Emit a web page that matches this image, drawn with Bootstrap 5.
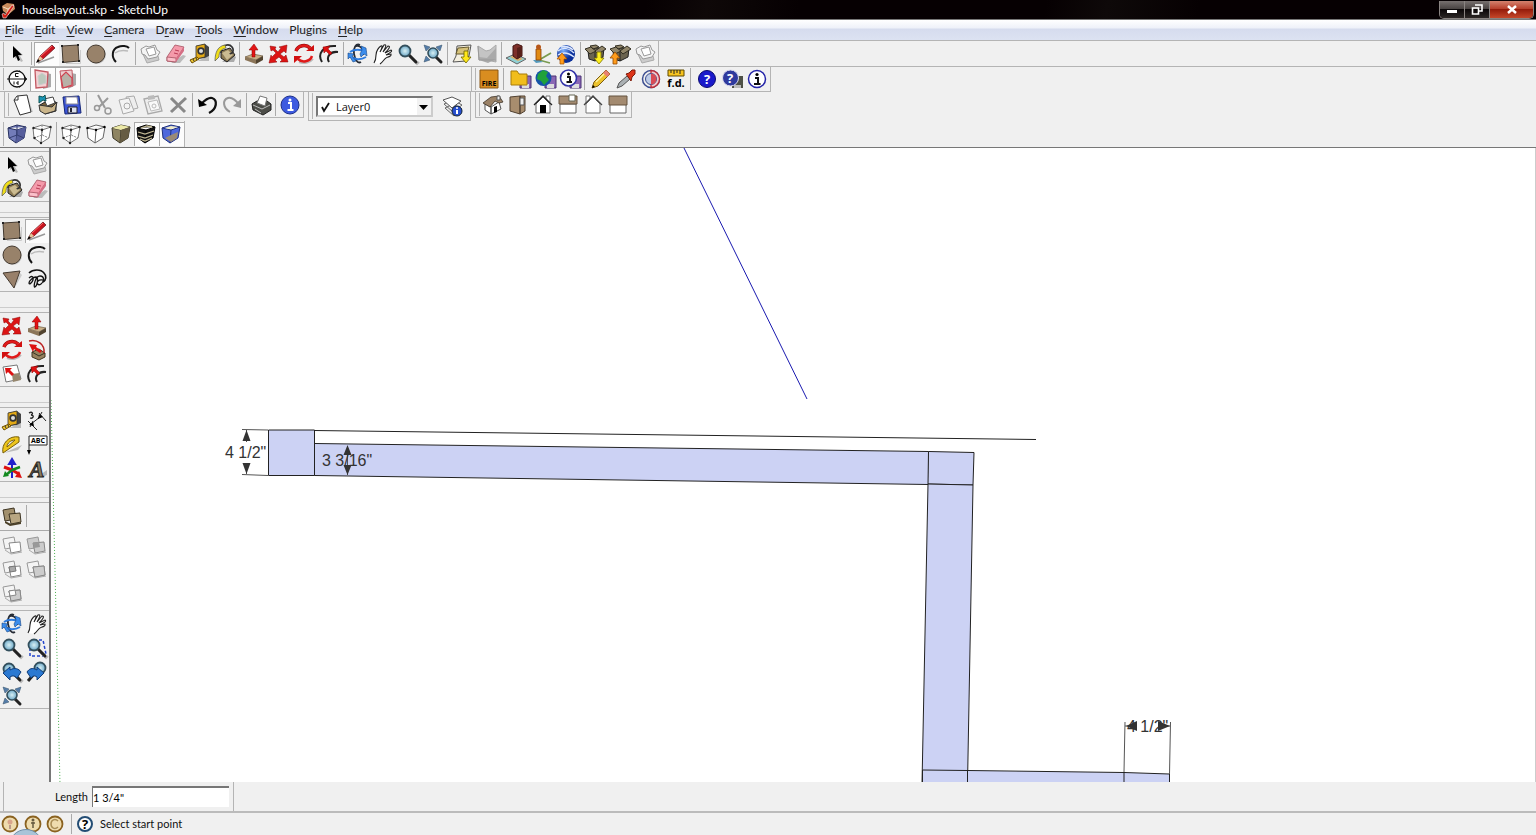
<!DOCTYPE html>
<html lang="en">
<head>
<meta charset="utf-8">
<meta name="viewport" content="width=device-width, initial-scale=1">
<title>houselayout.skp - SketchUp</title>
<link href="https://cdn.jsdelivr.net/npm/bootstrap@5.3.0/dist/css/bootstrap.min.css" rel="stylesheet">
<script src="https://cdn.jsdelivr.net/npm/bootstrap@5.3.0/dist/js/bootstrap.bundle.min.js"></script>
<style>
:root{--face:#f0f0f0;--line:#b4b4b4}
body{font-family:Lato,"Open Sans",sans-serif;font-size:12px;line-height:16px;color:#111;background:var(--face)}
button{padding:0;border:0;background:none;color:inherit}
.titlebar{height:20px;background:linear-gradient(100deg,#060002 0 42%,#0e0808 46%,#060002 52% 68%,#0e0909 72%,#060002 78%);border-bottom:1px solid #777;color:#fff}
.titlebar h1{font-size:12px;line-height:18px;font-weight:400;margin:0}
.caption-btns{height:18px;border:1px solid #8a8482;border-top:0;border-radius:0 0 5px 5px;overflow:hidden;margin-right:2px}
.caption-btns button{width:25px;height:17px;background:linear-gradient(#77706f,#4a4443 45%,#0b0708 50%,#2b2625);border-right:1px solid #8a8482}
.caption-btns button:last-child{width:43px;border:0;background:linear-gradient(#d4826e,#b8402c 45%,#951c0b 50%,#c5472a)}
.caption-btns svg{width:14px;height:14px}
.menubar{height:21px;gap:11px;padding-left:5px;background:linear-gradient(#fff,#eef1f9 40%,#d6dcee 45%,#dce2f2);border-bottom:1px solid var(--line)}
.menubar a{color:#222;text-decoration:none}
.menubar a u{text-underline-offset:2px}
.dock{border-bottom:1px solid var(--line)}
.dock-short{max-width:771px}
.h-std{height:26px}.h-sec{height:25px}.h-file{height:29px}
.band{padding-left:5px}
.band::before{content:"";align-self:stretch;width:1px;margin:1px 0 1px -2px;background:var(--line);margin-right:1px}
.band-end{border-right:1px solid var(--line)}
.w-section{flex:0 0 81px;border-right:1px solid var(--line)}
.w-spare{flex:0 0 391px;border-right:1px solid var(--line)}
.boxed{border:1px solid var(--line);border-top:0;height:26px}
.boxed.tall{height:29px}
.tb{width:25px;height:24px;flex:none;display:block}
.tb svg,.st svg{display:block;width:24px;height:24px}
.tb.active{background:#fcfcfc;box-shadow:inset 1px 1px #aaa}
.tb text,.st text{font-family:"Open Sans",sans-serif;font-weight:700;text-anchor:middle}
.tb .serif-a{font:italic 700 23px "Liberation Serif",serif}
.tb .tiny{font-size:7px}.tb .mid{font-size:11px}.tb .big,.st .big{font-size:13px}
.rule{flex:none;width:4px;align-self:stretch;margin:1px 0;background:linear-gradient(90deg,transparent 1px,#aaa 1px 2px,transparent 2px)}
.rule.wide{width:6px}
.layer{position:relative;width:117px;height:21px;margin-left:2px}
.layer select{appearance:none;width:100%;height:100%;border:2px solid #777;border-right-color:#ccc;border-bottom-color:#ccc;background:#fff;padding:0 0 0 18px;font:11px/15px "Open Sans",sans-serif;border-radius:0;color:#111}
.layer svg{position:absolute;inset:0;pointer-events:none;width:117px;height:21px}
.palettes{width:51px;flex:none;border-right:2px solid #777;padding-top:3px}
.palette{position:relative;border:solid var(--line);border-width:1px 0;padding-top:1px;display:flex;flex-wrap:wrap;margin-bottom:20px}
.palette .tb{width:24px;margin-right:0}
.palette .tb:nth-of-type(odd){margin-right:1px}
.palette + .palette::before{content:"";position:absolute;left:0;right:0;top:-6px;height:1px;background:#ccc}
.palette hr{width:100%;height:1px;margin:2px 0;border:0;background:#aaa;opacity:1}
.gap-s{margin-bottom:15px}.gap-xs{margin-bottom:4px}
.stage{border-top:1px solid #777}
.stage .view{background:#fff;min-width:0;overflow:hidden;border-right:1px solid #ccc}
.stage .view svg{display:block;width:100%;height:100%}
.dimtext{font:16px "Liberation Sans",Arial,sans-serif;fill:#333}
.vcb{height:31px;border-bottom:2px solid #bbb;font-size:11px}
.vcb .cell{width:231px;border:solid var(--line);border-width:0 1px;margin-left:3px;padding-right:4px}
.vcb input{width:137px;height:21px;border:solid #777;border-width:2px 0 0 1px;background:#fff;padding:0;font-size:11px;border-radius:0}
.statusbar{position:relative;height:22px;font-size:11px;overflow:hidden}
.statusbar .st{width:22px;height:22px;flex:none}
.statusbar .st svg{width:22px;height:22px}
.orb{position:absolute;left:9px;top:16px;width:34px;height:34px;border-radius:50%;background:#a9c4d8;border:1px solid #7290a8}
</style>
</head>
<body class="vh-100 d-flex flex-column overflow-hidden">
<svg width="0" height="0" class="position-absolute" aria-hidden="true">
<defs>
<radialGradient id="lens"><stop stop-color="#d8f0f4"/><stop offset="1" stop-color="#6aa6c6"/></radialGradient>
<radialGradient id="globe" cx=".35" cy=".3"><stop stop-color="#7fb2ff"/><stop offset="1" stop-color="#0a2f9a"/></radialGradient>
</defs>
<symbol id="select" viewBox="0 0 24 24"><path d="M10 6v11l3-2 3 5 2-1-3-5 3-1z" fill="#bbb"/><path d="M8 4v12l3-2 2 5 2-1-2-5h4z"/></symbol>
<symbol id="pencil" viewBox="0 0 24 24"><path d="M4 21l16-6" stroke="#999" stroke-width="1.5"/><path d="M3 20l3-6 12-11 3 3L9 17z" fill="#c91520" stroke="#601015" stroke-width=".7"/><path d="M7 14L18 4" stroke="#f66" stroke-width="1"/><path d="M3 20l3-6 3 3z" fill="#e4c79a"/><path d="M2 21l2-4 2 2z"/></symbol>
<symbol id="rect" viewBox="0 0 24 24"><path d="M7 21.500h14.500V8" fill="none" stroke="#ccc"/><path d="M3 4l16-1 1 16-16 1.500z" fill="#98826a" stroke="#443a30"/><path d="M2 3h2v2H2zM18 2h2v2h-2zM19 18h2v2h-2zM3 19h2v2H3z" fill="#222"/></symbol>
<symbol id="circle" viewBox="0 0 24 24"><circle cx="13" cy="13" r="9" fill="#ccc"/><circle cx="12" cy="12" r="9" fill="#98826a" stroke="#443a30"/></symbol>
<symbol id="arc" viewBox="0 0 24 24"><path d="M6 11c4-3 8-3 13-2" fill="none" stroke="#bbb" stroke-width="1.500"/><path d="M7 20C2 15 3 7 9 5c4-2 9-1 11 1" fill="none" stroke="#151515" stroke-width="2"/></symbol>
<symbol id="tri" viewBox="0 0 24 24"><path d="M20 6l2 2-8 14z" fill="#ccc"/><path d="M3 6l17-2-6 17z" fill="#98806a" stroke="#443a30"/></symbol>
<symbol id="free" viewBox="0 0 24 24"><path d="M4 6c4-4 12-4 15 0 3 3 2 7-1 9" fill="none" stroke="#111" stroke-width="1.700"/><path d="M4 11c3-3 5-1 4 2s-4 5-4 3 4-6 7-6 1 9-1 10 0-11 5-11 4 6 1 8-5-1-3-3 6-1 7 0" fill="none" stroke="#111" stroke-width="1.300"/></symbol>
<symbol id="comp" viewBox="0 0 24 24"><path d="M4 10l5 11 12-3-1-4" fill="#ccc" stroke="#aaa"/><path d="M3 7l5-3 3 1 6-2 2 5 3 2-3 5-9 2-3-4-3-1z" fill="#f4f4f4" stroke="#999"/><path d="M8 7l8-2 2 7-7 2z" fill="#fff" stroke="#999"/></symbol>
<symbol id="eraser" viewBox="0 0 24 24"><path d="M8 21h9l6-7-3-1z" fill="#bbb"/><path d="M4 15L12 3l9 2-8 13-1 2-8-1z" fill="#f49aaa" stroke="#a55060" stroke-width=".8"/><path d="M4 15l9 1v4l-9-1z" fill="#fbc0ca" stroke="#a55060" stroke-width=".8"/><path d="M21 5v4l-8 11v-4z" fill="#d56f85"/><path d="M12 8l4 1M11 11l4 1" stroke="#b93b55"/></symbol>
<symbol id="tape" viewBox="0 0 24 24"><path d="M9 19h12v-5z" fill="#bbb"/><path d="M8 4l9-2 4 3v9l-4 2-9 1z" fill="#444"/><path d="M8 4l9-2v13l-9 2z" fill="#e3a915" stroke="#333" stroke-width=".8"/><circle cx="13" cy="9" r="3.700" fill="#333"/><circle cx="13" cy="9" r="2" fill="#ddd"/><path d="M11 17l-7 4-2-3 7-3z" fill="#edc635" stroke="#705000"/><path d="M5 17l1 2M8 16l1 2" stroke="#333"/></symbol>
<symbol id="paint" viewBox="0 0 24 24"><path d="M9 20h12l2-5-4-3z" fill="#aaa"/><path d="M8 9l9-3 5 7-8 7-6-4z" fill="#8c7a54" stroke="#222"/><path d="M9 11l5 7 6-5-5-5z" fill="#cbbb91"/><path d="M8 11C7 3 16 1 19 5s-1 8-2 6" fill="none" stroke="#333" stroke-width="1.700"/><path d="M12 3C5 4 2 10 2 19l4-4c0-5 2-8 7-9z" fill="#f0de18" stroke="#555" stroke-width=".7"/></symbol>
<symbol id="push" viewBox="0 0 24 24"><path d="M3 15l8-3 10 2-7 4z" fill="#c8ae86" stroke="#57462e" stroke-width=".6"/><path d="M3 15l11 3v4L3 18z" fill="#8b7558"/><path d="M14 18l7-4v4l-7 4z" fill="#51432f"/><path d="M10 15V8H7l5-6 4 6h-3v7z" fill="#e31515" stroke="#800" stroke-width=".5"/></symbol>
<symbol id="move" viewBox="0 0 24 24"><path d="M3 4l6 1-1 2 3 3 3-4-2-1 8-2-1 8-2-2-4 3 4 3 2-2 2 7-8 0 2-2-3-3-4 3 2 2-8 1 2-8 1 2 4-4-3-3-2 1z" fill="#dc1515" stroke="#8d0505" stroke-width=".5"/></symbol>
<symbol id="rotate" viewBox="0 0 24 24"><path d="M7 20c5 2 11 1 14-3" fill="none" stroke="#bbb" stroke-width="2"/><path d="M4 9c2-6 10-7 14-3" fill="none" stroke="#8a0000" stroke-width="3.500"/><path d="M4 9c2-6 10-7 14-3M20 14c-2 6-10 7-14 3" fill="none" stroke="#e01a1a" stroke-width="2.500"/><path d="M14 9h8V3zM10 14H2v7z" fill="#d11010"/></symbol>
<symbol id="offset" viewBox="0 0 24 24"><path d="M5 20C0 12 6 3 19 4M12 20c-3-5 1-11 9-10" fill="none" stroke="#222" stroke-width="2"/><path d="M6 5l7-1-2 3 4 4-2 2-4-4-2 2z" fill="#d11" stroke="#800" stroke-width=".5"/></symbol>
<symbol id="follow" viewBox="0 0 24 24"><path d="M7 14l7-3 6 4v4l-6 3-7-3z" fill="#96805e" stroke="#433722"/><path d="M7 14l7 4 6-3" fill="none" stroke="#332"/><path d="M4 3c8-2 16 3 15 12" fill="none" stroke="#b22" stroke-width="1.500"/><path d="M15 15l-6-4-1 3-4-8 8 1-1 2 6 4z" fill="#d11"/></symbol>
<symbol id="scale" viewBox="0 0 24 24"><path d="M3 5l14-2 4 14-15 3z" fill="#fff" stroke="#777"/><path d="M12 12l7-1 2 7-8 2z" fill="#96876e"/><path d="M5 6l7 0-2 2 4 4-2 2-4-4-2 2z" fill="#d11"/></symbol>
<symbol id="orbit" viewBox="0 0 24 24"><path d="M14 3c-4-2-7 3-6 9s4 10 7 8M10 4c5-1 8 4 7 9" fill="none" stroke="#252b35" stroke-width="1.800"/><path d="M4 10c4-3 11-3 16 0M4 14c4 4 11 4 16 1" fill="none" stroke="#2e7ce0" stroke-width="2"/><path d="M15 4l5 2 1 8-3-2-3 3-1-3 2-4zM2 11l6 1-2 2 4 5-3 1-3-5-2 2z" fill="#3b8cec" stroke="#174785" stroke-width=".6"/></symbol>
<symbol id="hand" viewBox="0 0 24 24"><path d="M3 21c2-3 2-5 2-8 0-4 3-8 5-9 2-1 1 2-1 6l4-7c3-1 2 2-1 7l5-6c3 0 1 3-3 7l6-3c2 1-1 3-5 5l5-1c1 2-3 3-5 4-2 1-3 4-6 6" fill="#fff" stroke="#222" stroke-width="1.100"/></symbol>
<symbol id="zoom" viewBox="0 0 24 24"><path d="M14 15l7 7 2-2" stroke="#bbb" stroke-width="2" fill="none"/><path d="M13 13l7 7" stroke="#222" stroke-width="3" stroke-linecap="round"/><circle cx="9" cy="9" r="5.500" fill="url(#lens)" stroke="#334f5c" stroke-width="1.800"/></symbol>
<symbol id="zoomwin" viewBox="0 0 24 24"><path d="M5 7v13h15M9 4h9l3 14" fill="none" stroke="#24c" stroke-width="1.500" stroke-dasharray="3 2"/><use href="#zoom"/></symbol>
<symbol id="extents" viewBox="0 0 24 24"><path d="M3 3l6 2-4 4zM21 3l-6 2 4 4zM3 20l6-2-4-4z" fill="#557da8" stroke="#34506b" stroke-width=".5"/><path d="M15 15l5 5" stroke="#222" stroke-width="3" stroke-linecap="round"/><circle cx="12" cy="11" r="5" fill="url(#lens)" stroke="#334f5c" stroke-width="1.600"/></symbol>
<symbol id="prev" viewBox="0 0 24 24"><use href="#zoom"/><path d="M3 13l7-6v3c5-3 9-1 11 2l-4 6c-2-2-4-3-7-1v3z" fill="#2b79d2" stroke="#103c78"/></symbol>
<symbol id="next" viewBox="0 0 24 24"><path d="M9 14l-6 7" stroke="#222" stroke-width="3"/><circle cx="15" cy="8" r="5.500" fill="url(#lens)" stroke="#334f5c" stroke-width="1.800"/><path d="M19 13l-7-6v3c-5-3-8-1-10 2l4 6c2-2 3-3 6-1v3z" fill="#2b79d2" stroke="#103c78"/></symbol>
<symbol id="map" viewBox="0 0 24 24"><path d="M7 4l14-1-2 11-3 5-13 1 3-6z" fill="#f4efdf" stroke="#555"/><path d="M8 6l11-1-2 7H6z" fill="#d6c27a" stroke="#665a30"/><path d="M14 9h4v6h3l-5 6-5-6h3z" fill="#ffe818" stroke="#6b6200" stroke-width=".8"/></symbol>
<symbol id="terrain" viewBox="0 0 24 24"><path d="M3 4l8 5 4-1 6-5v17l-14-3-3 1z" fill="#c4c4c4" stroke="#aaa"/><path d="M4 15l8 1 9-10v11l-8 4-9-3z" fill="#aaa"/><path d="M3 4l1 14h17" fill="none" stroke="#999"/></symbol>
<symbol id="model" viewBox="0 0 24 24"><path d="M2 16l9-4 11 5-9 5z" fill="#8fd0d4" stroke="#666"/><path d="M6 15l5-2 8 4-5 2z" fill="#d9ae69"/><path d="M9 4l4-2 5 2v10l-5 3-4-3z" fill="#7d3029" stroke="#431511"/><path d="M13 6l5-2v10l-5 3z" fill="#572019"/></symbol>
<symbol id="person" viewBox="0 0 24 24"><path d="M10 18l12-7M10 18l11 3" stroke="#7a9b50" stroke-width="1.800" fill="none"/><path d="M4 18h6l4 2-7 1z" fill="#59b"/><path d="M7 7h5v11H7z" fill="#e08a12" stroke="#8a3d05" stroke-width=".8"/><circle cx="9.500" cy="5" r="2.500" fill="#b75719"/></symbol>
<symbol id="gearth" viewBox="0 0 24 24"><circle cx="12" cy="12" r="9" fill="url(#globe)"/><path d="M4 9c5-4 11-3 16 2M4 13c6-4 11-2 16 2M7 5c5-1 9 0 12 3" fill="none" stroke="#dce8ff" stroke-width="1.500"/><path d="M6 22v-5H3l5-6 5 6h-3v5z" fill="#ff9c1b" stroke="#a55200" stroke-width=".7"/></symbol>
<symbol id="box" viewBox="0 0 24 24"><path d="M5 9l5-3h11l-1 9-8 4-6-2z" fill="#6b6450" stroke="#222"/><path d="M12 10v9" stroke="#222"/><path d="M2 7l6-2 5 4-6 3zM12 9l7-5 4 3-8 5zM7 4l6-1 3 2-6 2z" fill="#91866a" stroke="#332f22"/></symbol>
<symbol id="getmod" viewBox="0 0 24 24"><use href="#box"/><path d="M14 10h4v6h3l-5 6-5-6h3z" fill="#fff01e" stroke="#7b7200" stroke-width=".8"/></symbol>
<symbol id="sharemod" viewBox="0 0 24 24"><use href="#box"/><path d="M5 22v-6H2l5-6 5 6H9v6z" fill="#ff9c1b" stroke="#954900" stroke-width=".8"/></symbol>
<symbol id="section" viewBox="0 0 24 24"><path d="M14 3l8 9-8 9z" fill="#000"/><circle cx="12" cy="12" r="8" fill="#fff" stroke="#111" stroke-width="1.300"/><path d="M2 12h20M9 14.500v3M14 15h-2v2h2M13.500 6.500h-3v3h3" fill="none" stroke="#111"/></symbol>
<symbol id="secplane" viewBox="0 0 24 24"><path d="M12 5l9 2v13l-8 2z" fill="#aaa"/><path d="M5 3l13 2-1 15-11 1z" fill="#f4d1d3" stroke="#c25862" stroke-width="1.300"/><path d="M8 9l4-3 4 3v7l-7 2z" fill="#bcc9bd" stroke="#ccc"/></symbol>
<symbol id="seccut" viewBox="0 0 24 24"><path d="M12 5l9 2v11l-8 4z" fill="#aaa"/><path d="M5 4l12-1 1 16-11 2z" fill="#eccfd1" stroke="#c25862"/><path d="M6 10l5-5 6 6v7l-9 3z" fill="#b8b1a7" stroke="#d04250" stroke-width="1.200"/></symbol>
<symbol id="new" viewBox="0 0 24 24"><path d="M7 6l11-2 5 15-14 3z" fill="#ccc"/><path d="M4 7l3-4 10-1 4 17-11 3z" fill="#fff" stroke="#333"/><path d="M4 7h4V3" fill="none" stroke="#333"/></symbol>
<symbol id="open" viewBox="0 0 24 24"><path d="M5 12l5-3 11 0v9l-11 3z" fill="#7a633c" stroke="#222"/><path d="M4 12l13 2 5-5-2 9-10 3-5-3z" fill="#cab58a" stroke="#333"/><path d="M9 6l9-2 2 6-8 3z" fill="#fff" stroke="#444"/><path d="M4 3l4 1 2-2 1 6-3-1-4 3z" fill="#1995b6" stroke="#155"/></symbol>
<symbol id="save" viewBox="0 0 24 24"><path d="M3 4l16-1 2 17-16 1z" fill="#3c55d8" stroke="#162778"/><path d="M6 4h11l1 7H6z" fill="#fff" stroke="#889"/><path d="M8 14h9v6H8z" fill="#dce0ee" stroke="#223"/><path d="M10 15h2v4h-2z" fill="#223"/></symbol>
<symbol id="cut" viewBox="0 0 24 24"><path d="M7 2l7 13M17 5l-9 9" stroke="#999" stroke-width="2"/><circle cx="6" cy="15" r="2.500" fill="none" stroke="#999" stroke-width="1.500"/><circle cx="17" cy="18" r="3" fill="none" stroke="#999" stroke-width="1.500"/></symbol>
<symbol id="copy" viewBox="0 0 24 24"><path d="M10 4l8-1 4 12-8 2z" fill="#eee" stroke="#aaa"/><path d="M3 7l10-2 5 13-11 3z" fill="#f4f4f4" stroke="#aaa"/><circle cx="11" cy="13" r="3" fill="none" stroke="#aaa"/></symbol>
<symbol id="paste" viewBox="0 0 24 24"><path d="M3 6l14-3 4 15-14 3z" fill="#eee" stroke="#aaa" stroke-width="1.300"/><path d="M7 3l6-1 1 4-7 1z" fill="#bbb"/><path d="M7 9l9-2 3 9-9 2z" fill="#fafafa" stroke="#bbb"/><circle cx="13" cy="13" r="2" fill="none" stroke="#bbb"/></symbol>
<symbol id="del" viewBox="0 0 24 24"><path d="M5 5l14 14M20 5L5 19" stroke="#888" stroke-width="3"/></symbol>
<symbol id="undo" viewBox="0 0 24 24"><path d="M14 20c8-4 9-13 3-15-4-1-8 3-11 6" fill="none" stroke="#111" stroke-width="2.300"/><path d="M3 6l1 8 8-2z"/></symbol>
<symbol id="redo" viewBox="0 0 24 24"><path d="M10 19c-7-4-8-12-2-14 4-1 9 3 11 7" fill="none" stroke="#999" stroke-width="2"/><path d="M21 6v9l-8-2z" fill="#999"/></symbol>
<symbol id="print" viewBox="0 0 24 24"><path d="M3 11l5-3h10l4 3v6l-8 5-10-5z" fill="#4c4d48" stroke="#222"/><path d="M4 12l9 4 8-4M6 16l6 4" fill="none" stroke="#bbb"/><path d="M8 10l3-7 7 2-2 8z" fill="#fff" stroke="#777"/></symbol>
<symbol id="modelinfo" viewBox="0 0 24 24"><circle cx="12" cy="12" r="9" fill="#3d5ae0" stroke="#1c2f88"/><path d="M10 10h3v7m-3.500 0h6" fill="none" stroke="#fff" stroke-width="2"/><circle cx="12" cy="7" r="1.500" fill="#fff"/></symbol>
<symbol id="layers" viewBox="0 0 24 24"><path d="M4 14l9 8 8-7-9-5zM3 10l9 8 9-7-9-5z" fill="#eee" stroke="#666"/><path d="M2 6l9 8 9-7-9-4z" fill="#fff" stroke="#555"/><circle cx="16" cy="17" r="5" fill="#2850d0" stroke="#123"/><path d="M16 16v4" stroke="#fff" stroke-width="2"/><circle cx="16" cy="14" r="1" fill="#fff"/></symbol>
<symbol id="iso" viewBox="0 0 24 24"><path d="M4 11l6 3v7l-6-4zM10 14l8-5 2 7-10 5z" fill="#fff" stroke="#555"/><path d="M2 10l8-6 8-1 4 6-4 1-4-2-5 6z" fill="#9b8267" stroke="#3d3328" stroke-width=".8"/><path d="M16 3h3v4h-3z" fill="#eee" stroke="#555"/><path d="M13 14l3-1v6l-3 1z"/></symbol>
<symbol id="top" viewBox="0 0 24 24"><path d="M4 4l10-1v18l-10-3zM14 3l5 0v15l-5 3z" fill="#a88d6e" stroke="#514130"/><path d="M14 5h4v7h-4z" fill="#eee" stroke="#555"/></symbol>
<symbol id="front" viewBox="0 0 24 24"><path d="M15 3h4v6h-4z" fill="#fff" stroke="#777"/><path d="M5 11l7-7 7 7v9H5z" fill="#fff" stroke="#666"/><path d="M3 12l9-9 9 9" fill="none" stroke="#222" stroke-width="1.300"/><path d="M9 12h6v8H9z"/></symbol>
<symbol id="right" viewBox="0 0 24 24"><path d="M4 11h16v9H4z" fill="#fff" stroke="#666"/><path d="M3 3h18v8H3z" fill="#a38a70" stroke="#65533f"/><path d="M13 2h6v6h-6z" fill="#fff" stroke="#665"/></symbol>
<symbol id="back" viewBox="0 0 24 24"><path d="M5 3h4v7H5z" fill="#fff" stroke="#777"/><path d="M5 11l7-7 7 7v9H5z" fill="#fff" stroke="#777"/><path d="M3 12l9-9 9 9" fill="none" stroke="#444" stroke-width="1.300"/></symbol>
<symbol id="left" viewBox="0 0 24 24"><path d="M4 11h16v9H4z" fill="#fff" stroke="#666"/><path d="M3 3h18v9H3z" fill="#a38a70" stroke="#65533f"/></symbol>
<symbol id="cube" viewBox="0 0 24 24"><path d="M3 6l9-3 9 2-2 11-8 5-7-5zM3 6l9 2 9-3M12 8l-1 13"/></symbol>
<symbol id="xray" viewBox="0 0 24 24"><g fill="#737cb9" stroke="#26305f"><use href="#cube"/></g><path d="M12 8l9-3-2 11-8 5z" fill="#565e9c"/><path d="M4 16l8-3 7 3M12 3v10" fill="none" stroke="#353e72"/></symbol>
<symbol id="wire" viewBox="0 0 24 24"><g fill="#fff" stroke="#777"><use href="#cube"/></g><path d="M4 16l8-3 7 3M12 3v10" fill="none" stroke="#888" stroke-dasharray="2 1"/><g fill="#222"><circle cx="3.500" cy="6" r="1.200"/><circle cx="20.500" cy="5" r="1.200"/><circle cx="12" cy="8" r="1.200"/><circle cx="11" cy="21" r="1.200"/><circle cx="4.500" cy="16" r="1.200"/></g></symbol>
<symbol id="hidden" viewBox="0 0 24 24"><g fill="#fff" stroke="#666"><use href="#cube"/></g><circle cx="12" cy="8" r="1.200"/><circle cx="3.500" cy="6" r="1.200"/><circle cx="20.500" cy="5" r="1.200"/></symbol>
<symbol id="shaded" viewBox="0 0 24 24"><g fill="#8e8462" stroke="#3c3829"><use href="#cube"/></g><path d="M3 6l9-3 9 2-9 3z" fill="#ece9a8"/><path d="M12 8l9-3-2 11-8 5z" fill="#665c43"/></symbol>
<symbol id="texture" viewBox="0 0 24 24"><g fill="#111" stroke="#000"><use href="#cube"/></g><path d="M7 6l6-2 5 1M4 10l7 2 9-3M4 14l7 2 8-3M6 17l5 2 7-3" fill="none" stroke="#c3b994" stroke-width="1.300"/></symbol>
<symbol id="mono" viewBox="0 0 24 24"><g fill="#4f68dc" stroke="#20327f"><use href="#cube"/></g><path d="M6 6l6-2 7 1-7 2z" fill="#eeeac5"/><path d="M12 13l7-3-1 6-6 4-6-4z" fill="#9a8a75"/></symbol>
<symbol id="fire" viewBox="0 0 24 24"><path d="M3 3h18v18H3z" fill="#d98d20" stroke="#8a5714"/></symbol>
<symbol id="disk" viewBox="0 0 24 24"><path d="M12 9h11v12H12z" fill="#8a67b5" stroke="#4b3275"/><path d="M14 17h7v4h-7z" fill="#ddd"/></symbol>
<symbol id="folder" viewBox="0 0 24 24"><use href="#disk"/><path d="M3 4h6l2 3h8v11H3z" fill="#f1bd1c" stroke="#a87c08"/></symbol>
<symbol id="world" viewBox="0 0 24 24"><use href="#disk"/><circle cx="10.500" cy="11" r="8" fill="#1554a8"/><path d="M5 7l5-4 5 2-2 4 3 4-5 5-3-4-4-2z" fill="#20a23b"/></symbol>
<symbol id="idisk" viewBox="0 0 24 24"><use href="#disk"/><circle cx="10.500" cy="11" r="8" fill="#fff" stroke="#3434a8" stroke-width="1.600"/><path d="M9 10h3v5m-3.500 0h5.500" fill="none" stroke="#111" stroke-width="2"/><circle cx="10.500" cy="7" r="1.500"/></symbol>
<symbol id="ypencil" viewBox="0 0 24 24"><path d="M3 21l2-6L17 3l4 4L9 19z" fill="#edc32b" stroke="#7e5d11"/><path d="M17 3l4 4-3 3-4-4z" fill="#e98171"/><path d="M7 15l8-8" stroke="#fff1a0" stroke-width="1.500"/><path d="M3 21l1-3 2 2z"/></symbol>
<symbol id="dropper" viewBox="0 0 24 24"><path d="M3 21l2-5 8-7 3 3-8 7z" fill="#aab0b3" stroke="#555"/><path d="M12 7l3-1 3-3h3v4l-3 3-1 4z" fill="#dd3419" stroke="#7e1b0a"/></symbol>
<symbol id="contrast" viewBox="0 0 24 24"><circle cx="12" cy="12" r="8.500" fill="#eee" stroke="#3c4e91" stroke-width="1.500"/><path d="M12 3.500a8.500 8.500 0 010 17z" fill="#f2c6c9" stroke="#bd2a36" stroke-width="1.300"/><circle cx="12" cy="12" r="5.500" fill="#bccbe6" stroke="#3c4e91"/><path d="M12 6.500a5.500 5.500 0 010 11z" fill="#d94b55"/></symbol>
<symbol id="ruler" viewBox="0 0 24 24"><path d="M4 3h16v6H4z" fill="#f7c41e" stroke="#614a00"/><path d="M7 3v3M10 3v4M13 3v3M16 3v4" stroke="#222"/></symbol>
<symbol id="help" viewBox="0 0 24 24"><circle cx="12" cy="12" r="8.500" fill="#1a1acb" stroke="#0a0a70"/></symbol>
<symbol id="helpdisk" viewBox="0 0 24 24"><path d="M12 9h11v12H12z" fill="#4e5146"/><path d="M14 18h7v3h-7z" fill="#bbb"/><circle cx="10.500" cy="11" r="8" fill="#2f3a9d" stroke="#dde"/></symbol>
<symbol id="info" viewBox="0 0 24 24"><circle cx="12" cy="12" r="8.500" fill="#fff" stroke="#2424a8" stroke-width="1.500"/><path d="M10 11h3v6m-4 0h6.500" fill="none" stroke="#111" stroke-width="2"/><circle cx="12" cy="7.500" r="1.600"/></symbol>
<symbol id="dims" viewBox="0 0 24 24"><path d="M6 15L15 8M14 4l7 8M3 12l9 9M13 10l4-7M5 18l3-6" stroke="#222" fill="none"/><path d="M4 4c3-2 5 1 2 2 4 0 2 4-1 3" fill="none" stroke="#222" stroke-width="1.300"/><path d="M14 5l-1 5 5-2zM8 13l-4 3 5 1z"/></symbol>
<symbol id="protractor" viewBox="0 0 24 24"><path d="M4 20l14-3 4-5z" fill="#bbb"/><path d="M3 20C1 11 9 2 19 4v5z" fill="#edc51c" stroke="#79600a"/><path d="M7 14c0-4 4-7 8-7z" fill="#eee" stroke="#79600a"/></symbol>
<symbol id="label" viewBox="0 0 24 24"><path d="M4 3h18v9H4zM4 12v7" fill="#fff" stroke="#222"/><path d="M2 17h4l-2 5z"/></symbol>
<symbol id="axes" viewBox="0 0 24 24"><path d="M12 21V6M9 7l3-5 3 5z" fill="#22c" stroke="#22c" stroke-width="2"/><path d="M12 13l7 4m-7-4l-8-3" stroke="#d11" stroke-width="3"/><path d="M15 20l7 1-3-7z" fill="#d11"/><path d="M12 13l-6 5m6-5l8-3" stroke="#138a20" stroke-width="2.500"/><path d="M3 20l2-6 4 5z" fill="#138a20"/></symbol>
<symbol id="outer" viewBox="0 0 24 24"><path d="M3 6l11-2 2 11-11 2z" fill="#a2906d" stroke="#3d3422"/><path d="M9 10l11-1 1 9-10 2z" fill="#b8a682" stroke="#3d3422"/><path d="M5 17l6 3 10-2v2l-11 2-5-3z" fill="#4b4029"/></symbol>
<symbol id="sol1" viewBox="0 0 24 24"><path d="M3 6l11-2 2 10-11 2z" fill="#f4f4f4" stroke="#999"/><path d="M9 10l11-1 1 9-10 2z" fill="#fff" stroke="#888"/><path d="M5 17l6 4 11-2" fill="none" stroke="#aaa"/></symbol>
<symbol id="sol2" viewBox="0 0 24 24"><path d="M3 6l11-2 2 10-11 2z" fill="#ccc" stroke="#999"/><path d="M9 10l11-1 1 9-10 2z" fill="#ccc" stroke="#888"/><path d="M9 10l6-1 1 5-6 1z" fill="#999"/><path d="M5 17l6 4 11-2" fill="none" stroke="#aaa"/></symbol>
<symbol id="sol3" viewBox="0 0 24 24"><use href="#sol1"/><path d="M9 10l6-1 1 5-6 1z" fill="#aaa" stroke="#777"/></symbol>
<symbol id="sol4" viewBox="0 0 24 24"><use href="#sol1"/><path d="M9 10l11-1 1 9-10 2z" fill="#ccc" stroke="#888"/></symbol>
<symbol id="sol5" viewBox="0 0 24 24"><use href="#sol4"/><path d="M9 10l6-1 1 5-6 1z" fill="#fff" stroke="#888"/></symbol>
</svg>

<header>
<div class="titlebar d-flex align-items-center justify-content-between">
<div class="d-flex align-items-center gap-1">
<svg width="18" height="18" viewBox="0 0 18 18" aria-hidden="true"><path d="M2 5l5-3 7 1 1 5-7 6-5-4z" fill="#c98a5c"/><path d="M3 6l5 2 6-4M8 8v6" stroke="#f3dcc0" fill="none"/><path d="M3 17l-1-4 2-1 1 2 7-10 2 1-8 12z" fill="#d42015" stroke="#fff" stroke-width=".5"/></svg>
<h1>houselayout.skp - SketchUp</h1></div>
<div class="caption-btns d-flex">
<button aria-label="Minimize"><svg viewBox="0 0 14 14"><path d="M2 7h10v3H2z" fill="#fff"/></svg></button>
<button aria-label="Restore"><svg viewBox="0 0 14 14"><path d="M5 2h7v6H9M2.500 5h6v6h-6z" fill="none" stroke="#fff" stroke-width="1.600"/></svg></button>
<button aria-label="Close"><svg viewBox="0 0 14 14"><path d="M3 3l8 7M11 3l-8 7" stroke="#fff" stroke-width="2.500"/></svg></button>
</div></div>
<nav class="menubar d-flex align-items-center">
<a href="#"><u>F</u>ile</a><a href="#"><u>E</u>dit</a><a href="#"><u>V</u>iew</a><a href="#"><u>C</u>amera</a><a href="#">D<u>r</u>aw</a><a href="#"><u>T</u>ools</a><a href="#"><u>W</u>indow</a><a href="#">Plugins</a><a href="#"><u>H</u>elp</a>
</nav>

<div class="dock h-std d-flex">
<div class="band band-end d-flex align-items-center" role="toolbar" aria-label="Getting started">
<button class="tb" aria-label="Select"><svg><use href="#select"/></svg></button><span class="rule"></span>
<button class="tb active" aria-label="Line"><svg><use href="#pencil"/></svg></button><button class="tb" aria-label="Rectangle"><svg><use href="#rect"/></svg></button><button class="tb" aria-label="Circle"><svg><use href="#circle"/></svg></button><button class="tb" aria-label="Arc"><svg><use href="#arc"/></svg></button><span class="rule"></span>
<button class="tb" aria-label="Make component"><svg><use href="#comp"/></svg></button><button class="tb" aria-label="Eraser"><svg><use href="#eraser"/></svg></button><button class="tb" aria-label="Tape measure"><svg><use href="#tape"/></svg></button><button class="tb" aria-label="Paint bucket"><svg><use href="#paint"/></svg></button><span class="rule"></span>
<button class="tb" aria-label="Push/Pull"><svg><use href="#push"/></svg></button><button class="tb" aria-label="Move"><svg><use href="#move"/></svg></button><button class="tb" aria-label="Rotate"><svg><use href="#rotate"/></svg></button><button class="tb" aria-label="Offset"><svg><use href="#offset"/></svg></button><span class="rule"></span>
<button class="tb" aria-label="Orbit"><svg><use href="#orbit"/></svg></button><button class="tb" aria-label="Pan"><svg><use href="#hand"/></svg></button><button class="tb" aria-label="Zoom"><svg><use href="#zoom"/></svg></button><button class="tb" aria-label="Zoom extents"><svg><use href="#extents"/></svg></button><span class="rule"></span>
<button class="tb" aria-label="Add location"><svg><use href="#map"/></svg></button><button class="tb" aria-label="Toggle terrain"><svg><use href="#terrain"/></svg></button><span class="rule"></span>
<button class="tb" aria-label="Add building"><svg><use href="#model"/></svg></button><button class="tb" aria-label="Photo textures"><svg><use href="#person"/></svg></button><button class="tb" aria-label="Preview in Google Earth"><svg><use href="#gearth"/></svg></button><span class="rule"></span>
<button class="tb" aria-label="Get models"><svg><use href="#getmod"/></svg></button><button class="tb" aria-label="Share model"><svg><use href="#sharemod"/></svg></button><button class="tb" aria-label="Share component"><svg><use href="#comp"/></svg></button>
</div></div>

<div class="dock dock-short h-sec d-flex">
<div class="band w-section d-flex align-items-center" role="toolbar" aria-label="Sections">
<button class="tb" aria-label="Section plane"><svg><use href="#section"/></svg></button><button class="tb active" aria-label="Display section planes"><svg><use href="#secplane"/></svg></button><button class="tb active" aria-label="Display section cuts"><svg><use href="#seccut"/></svg></button></div>
<div class="w-spare"></div>
<div class="band band-end d-flex align-items-center" role="toolbar" aria-label="Plugins">
<button class="tb" aria-label="Fire"><svg><use href="#fire"/><text class="tiny" x="12" y="19">FIRE</text></svg></button><span class="rule wide"></span>
<button class="tb" aria-label="Open folder"><svg><use href="#folder"/></svg></button><button class="tb" aria-label="Web"><svg><use href="#world"/></svg></button><button class="tb" aria-label="File info"><svg><use href="#idisk"/></svg></button><span class="rule wide"></span>
<button class="tb" aria-label="Edit"><svg><use href="#ypencil"/></svg></button><button class="tb" aria-label="Pick colour"><svg><use href="#dropper"/></svg></button><button class="tb" aria-label="Contrast"><svg><use href="#contrast"/></svg></button><button class="tb" aria-label="f.d."><svg><use href="#ruler"/><text class="mid" x="12" y="20">f.d.</text></svg></button><span class="rule wide"></span>
<button class="tb" aria-label="Help"><svg><use href="#help"/><text class="big" x="12" y="17" fill="#fff">?</text></svg></button><button class="tb" aria-label="Saved help"><svg><use href="#helpdisk"/><text class="big" x="10" y="16" fill="#fff">?</text></svg></button><button class="tb" aria-label="About"><svg><use href="#info"/></svg></button>
</div></div>

<div class="h-file d-flex gap-1">
<div class="band boxed ms-1 d-flex align-items-center" role="toolbar" aria-label="Standard">
<button class="tb" aria-label="New"><svg><use href="#new"/></svg></button><button class="tb" aria-label="Open"><svg><use href="#open"/></svg></button><button class="tb" aria-label="Save"><svg><use href="#save"/></svg></button><span class="rule wide"></span>
<button class="tb" aria-label="Cut"><svg><use href="#cut"/></svg></button><button class="tb" aria-label="Copy"><svg><use href="#copy"/></svg></button><button class="tb" aria-label="Paste"><svg><use href="#paste"/></svg></button><button class="tb" aria-label="Delete"><svg><use href="#del"/></svg></button><span class="rule"></span>
<button class="tb" aria-label="Undo"><svg><use href="#undo"/></svg></button><button class="tb" aria-label="Redo"><svg><use href="#redo"/></svg></button><span class="rule"></span>
<button class="tb" aria-label="Print"><svg><use href="#print"/></svg></button><span class="rule"></span>
<button class="tb" aria-label="Model info"><svg><use href="#modelinfo"/></svg></button></div>
<div class="band boxed tall d-flex align-items-center" role="toolbar" aria-label="Layers">
<div class="layer"><select aria-label="Layer"><option>Layer0</option></select>
<svg aria-hidden="true"><path d="M101 2h14v17h-14z" fill="#f2f2f2"/><path d="M103 9h9l-4.500 5z"/><path d="M6 11l2 4 5-8" fill="none" stroke="#111" stroke-width="1.800"/></svg></div>
<button class="tb ms-2 me-1" aria-label="Layer manager"><svg><use href="#layers"/></svg></button></div>
<div class="band boxed d-flex align-items-center" role="toolbar" aria-label="Views">
<button class="tb" aria-label="Iso"><svg><use href="#iso"/></svg></button><button class="tb" aria-label="Top"><svg><use href="#top"/></svg></button><button class="tb" aria-label="Front"><svg><use href="#front"/></svg></button><button class="tb" aria-label="Right"><svg><use href="#right"/></svg></button><button class="tb" aria-label="Back"><svg><use href="#back"/></svg></button><button class="tb" aria-label="Left"><svg><use href="#left"/></svg></button></div>
</div>

<div class="h-std d-flex">
<div class="band band-end d-flex align-items-center" role="toolbar" aria-label="Styles">
<button class="tb" aria-label="X-ray"><svg><use href="#xray"/></svg></button><button class="tb" aria-label="Back edges"><svg><use href="#wire"/></svg></button><span class="rule"></span>
<button class="tb" aria-label="Wireframe"><svg><use href="#wire"/></svg></button><button class="tb" aria-label="Hidden line"><svg><use href="#hidden"/></svg></button><button class="tb" aria-label="Shaded"><svg><use href="#shaded"/></svg></button><button class="tb active" aria-label="Shaded with textures"><svg><use href="#texture"/></svg></button><button class="tb active" aria-label="Monochrome"><svg><use href="#mono"/></svg></button></div></div>
</header>

<main class="stage d-flex flex-grow-1 overflow-hidden">
<aside class="palettes">
<div class="palette gap-s"><button class="tb" aria-label="Select"><svg><use href="#select"/></svg></button><button class="tb" aria-label="Make component"><svg><use href="#comp"/></svg></button><button class="tb" aria-label="Paint bucket"><svg><use href="#paint"/></svg></button><button class="tb" aria-label="Eraser"><svg><use href="#eraser"/></svg></button></div>
<div class="palette"><button class="tb" aria-label="Rectangle"><svg><use href="#rect"/></svg></button><button class="tb active" aria-label="Line"><svg><use href="#pencil"/></svg></button><button class="tb" aria-label="Circle"><svg><use href="#circle"/></svg></button><button class="tb" aria-label="Arc"><svg><use href="#arc"/></svg></button><button class="tb" aria-label="Polygon"><svg><use href="#tri"/></svg></button><button class="tb" aria-label="Freehand"><svg><use href="#free"/></svg></button></div>
<div class="palette"><button class="tb" aria-label="Move"><svg><use href="#move"/></svg></button><button class="tb" aria-label="Push/Pull"><svg><use href="#push"/></svg></button><button class="tb" aria-label="Rotate"><svg><use href="#rotate"/></svg></button><button class="tb" aria-label="Follow me"><svg><use href="#follow"/></svg></button><button class="tb" aria-label="Scale"><svg><use href="#scale"/></svg></button><button class="tb" aria-label="Offset"><svg><use href="#offset"/></svg></button></div>
<div class="palette"><button class="tb" aria-label="Tape measure"><svg><use href="#tape"/></svg></button><button class="tb" aria-label="Dimensions"><svg><use href="#dims"/></svg></button><button class="tb" aria-label="Protractor"><svg><use href="#protractor"/></svg></button><button class="tb" aria-label="Text"><svg><use href="#label"/><text class="tiny" x="13" y="10">ABC</text></svg></button><button class="tb" aria-label="Axes"><svg><use href="#axes"/></svg></button><button class="tb" aria-label="3D text"><svg><path d="M12 20l10-7v5l-5 2z" fill="#bbb"/><text class="serif-a" x="12" y="20" fill="#887b60" stroke="#222">A</text></svg></button></div>
<div class="palette gap-xs"><button class="tb" aria-label="Outer shell"><svg><use href="#outer"/></svg></button><span class="rule"></span><hr><button class="tb me-0" aria-label="Intersect"><svg><use href="#sol1"/></svg></button><button class="tb ms-0" aria-label="Union"><svg><use href="#sol2"/></svg></button><button class="tb me-0" aria-label="Subtract"><svg><use href="#sol3"/></svg></button><button class="tb" aria-label="Trim"><svg><use href="#sol4"/></svg></button><button class="tb" aria-label="Split"><svg><use href="#sol5"/></svg></button></div>
<div class="palette mb-0"><button class="tb" aria-label="Orbit"><svg><use href="#orbit"/></svg></button><button class="tb" aria-label="Pan"><svg><use href="#hand"/></svg></button><button class="tb" aria-label="Zoom"><svg><use href="#zoom"/></svg></button><button class="tb" aria-label="Zoom window"><svg><use href="#zoomwin"/></svg></button><button class="tb" aria-label="Previous"><svg><use href="#prev"/></svg></button><button class="tb" aria-label="Next"><svg><use href="#next"/></svg></button><button class="tb" aria-label="Zoom extents"><svg><use href="#extents"/></svg></button></div>
</aside>
<div class="view flex-grow-1">
<svg role="img" aria-label="Wall layout drawing"><g transform="translate(-51 -148)" stroke="#222" fill="none">
<path d="M51 400L60 784" stroke="#4caf50" stroke-dasharray="1 2"/>
<path d="M684 148L807 399" stroke="#1a1ab0"/>
<g fill="#ccd2f4"><path d="M314.500 443.500L928.500 451.500V484.500L314.500 475.500z"/><path d="M268.500 430H314.500V475.500H268.500z"/><path d="M928.500 451.500L974 452.500L973 485L928 484z"/><path d="M928 484L973 485L967.500 784H922z"/><path d="M922.500 770L968 770.500L1124 772.500L1169.500 774V786H922.500z"/></g>
<path d="M314 430.500L1036 439.500M967.500 770V784M1124 772V784"/>
<path d="M242 429.500L268 430M242 474.500L268 475.500M246.500 430V442M246.500 463V474M347.500 446V475M1125 722L1124 772M1170.500 722L1169.500 774M1125 726H1134M1160 726H1170" stroke="#555"/>
<g fill="#333" stroke="none"><path d="M246.500 430l4 11h-8zM246.500 474l4-11h-8zM347.500 445l4 10h-8zM347.500 475l4-10h-8zM1126 726l11-5v10zM1170 726l-12-5v10z"/></g>
<g class="dimtext" stroke="none"><text x="225" y="458">4 1/2"</text><text x="322" y="466">3 3/16"</text><text x="1127" y="732">4 1/2"</text></g>
</g></svg></div>
</main>

<footer>
<div class="vcb d-flex"><div class="cell d-flex align-items-center justify-content-end gap-1"><label for="len">Length</label><input id="len" type="text" value='1 3/4"'></div></div>
<div class="statusbar d-flex align-items-center">
<button class="st" aria-label="Geolocation"><svg viewBox="0 0 22 22"><circle cx="10" cy="11" r="7.500" fill="#efdcae" stroke="#8a6220" stroke-width="1.800"/><path d="M10 16v-4" stroke="#b98" stroke-width="2"/><circle cx="10" cy="9" r="2.500" fill="#d9a58c"/></svg></button>
<button class="st" aria-label="Credits"><svg viewBox="0 0 22 22"><circle cx="11" cy="11" r="7.500" fill="#efdcae" stroke="#8a6220" stroke-width="1.800"/><path d="M11 9v6M9 10h4" stroke="#665a40" stroke-width="1.500"/><circle cx="11" cy="7" r="1.500" fill="#665a40"/></svg></button>
<button class="st" aria-label="Claim credit"><svg viewBox="0 0 22 22"><circle cx="11" cy="11" r="7.500" fill="#efdcae" stroke="#8a6220" stroke-width="1.800"/><path d="M14 8c-3-3-7-1-7 3s4 6 7 3" fill="none" stroke="#a98d55" stroke-width="1.500"/></svg></button>
<span class="rule ms-1"></span>
<button class="st" aria-label="Instructor"><svg viewBox="0 0 22 22"><circle cx="11" cy="11" r="7" fill="#fff" stroke="#234d74" stroke-width="2"/><text class="big" x="11" y="16">?</text></svg></button>
<span class="ms-1">Select start point</span>
<span class="orb"></span>
</div>
</footer>
</body>
</html>
